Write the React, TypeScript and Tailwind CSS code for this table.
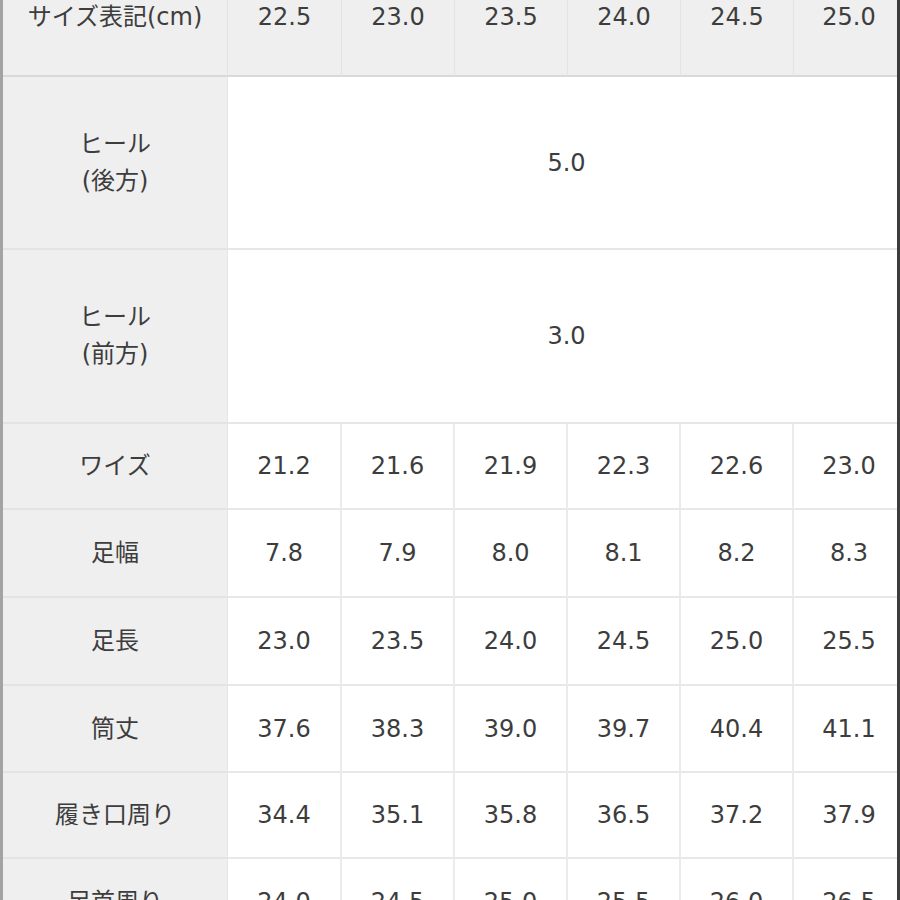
import React from "react";

const sizes = ["22.5", "23.0", "23.5", "24.0", "24.5", "25.0"];

const rows: { label: string; values: string[]; h: string }[] = [
  { label: "ワイズ", values: ["21.2", "21.6", "21.9", "22.3", "22.6", "23.0"], h: "h-[86px]" },
  { label: "足幅", values: ["7.8", "7.9", "8.0", "8.1", "8.2", "8.3"], h: "h-[88px]" },
  { label: "足長", values: ["23.0", "23.5", "24.0", "24.5", "25.0", "25.5"], h: "h-[88px]" },
  { label: "筒丈", values: ["37.6", "38.3", "39.0", "39.7", "40.4", "41.1"], h: "h-[87px]" },
  { label: "履き口周り", values: ["34.4", "35.1", "35.8", "36.5", "37.2", "37.9"], h: "h-[86px]" },
  { label: "足首周り", values: ["24.0", "24.5", "25.0", "25.5", "26.0", "26.5"], h: "h-[88px]" },
];

export default function App() {
  return (
    <div
      className="w-[900px] h-[900px] overflow-hidden bg-white border-l-[3px] border-l-[#a3a3a3] border-r-[3px] border-r-[#3c3c3c] text-[24px] text-[#3d3d3d]"
      style={{ fontFamily: '"DejaVu Sans", "Noto Sans CJK JP", sans-serif' }}
    >
      <div className="grid grid-cols-[225px_114px_113px_113px_113px_113px_1fr]">
        {/* header */}
        <div className="h-[77px] bg-[#efefef] border-r border-r-[#e3e3e3] border-b-2 border-b-[#d9d9d9] flex justify-center leading-[34px]">
          サイズ表記(cm)
        </div>
        {sizes.map((s, i) => (
          <div
            key={s}
            className={`h-[77px] bg-[#efefef] border-b-2 border-b-[#d9d9d9] flex justify-center leading-[34px] ${
              i < 5 ? "border-r border-r-[#e3e3e3]" : "pl-[7px]"
            }`}
          >
            {s}
          </div>
        ))}

        {/* heel rows */}
        <div className="h-[173px] bg-[#efefef] border-r border-r-[#e6e6e6] border-b-2 border-b-[#e3e3e3] flex flex-col items-center justify-center leading-[37px]">
          <span>ヒール</span>
          <span>(後方)</span>
        </div>
        <div className="col-span-6 h-[173px] border-b-2 border-b-[#e6e6e6] flex items-center justify-center pl-[8px]">
          5.0
        </div>
        <div className="h-[174px] bg-[#efefef] border-r border-r-[#e6e6e6] border-b-2 border-b-[#e3e3e3] flex flex-col items-center justify-center leading-[37px]">
          <span>ヒール</span>
          <span>(前方)</span>
        </div>
        <div className="col-span-6 h-[174px] border-b-2 border-b-[#e6e6e6] flex items-center justify-center pl-[8px]">
          3.0
        </div>

        {rows.map((r) => (
          <React.Fragment key={r.label}>
            <div
              className={`${r.h} bg-[#efefef] border-r border-r-[#e6e6e6] border-b-2 border-b-[#e3e3e3] flex items-center justify-center`}
            >
              {r.label}
            </div>
            {r.values.map((v, i) => (
              <div
                key={i}
                className={`${r.h} border-b-2 border-b-[#e8e8e8] flex items-center justify-center ${
                  i < 5 ? "border-r-2 border-r-[#ebebeb]" : "pl-[7px]"
                }`}
              >
                {v}
              </div>
            ))}
          </React.Fragment>
        ))}
      </div>
    </div>
  );
}
